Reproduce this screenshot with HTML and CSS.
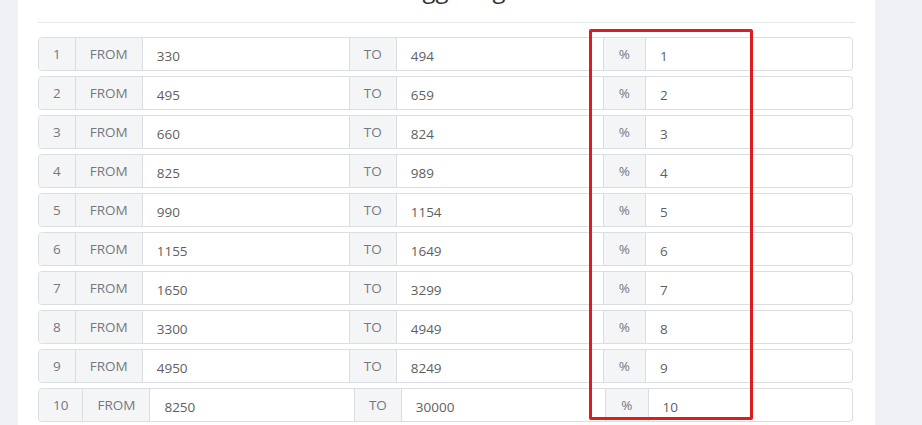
FILE: index.html
```html
<!DOCTYPE html>
<html lang="en">
<head>
<meta charset="utf-8">
<title>Ranges</title>
<link rel="stylesheet" href="styles.css">
</head>
<body>
<div class="page">
  <div class="card">
    <div class="head"><h2 class="title">Staggering</h2></div>
    <div class="rows">
      <div class="ig"><span class="addon">1</span><span class="addon">FROM</span><span class="val">330</span><span class="addon">TO</span><span class="val">494</span><span class="addon pct">%</span><span class="val">1</span></div>
      <div class="ig"><span class="addon">2</span><span class="addon">FROM</span><span class="val">495</span><span class="addon">TO</span><span class="val">659</span><span class="addon pct">%</span><span class="val">2</span></div>
      <div class="ig"><span class="addon">3</span><span class="addon">FROM</span><span class="val">660</span><span class="addon">TO</span><span class="val">824</span><span class="addon pct">%</span><span class="val">3</span></div>
      <div class="ig"><span class="addon">4</span><span class="addon">FROM</span><span class="val">825</span><span class="addon">TO</span><span class="val">989</span><span class="addon pct">%</span><span class="val">4</span></div>
      <div class="ig"><span class="addon">5</span><span class="addon">FROM</span><span class="val">990</span><span class="addon">TO</span><span class="val">1154</span><span class="addon pct">%</span><span class="val">5</span></div>
      <div class="ig"><span class="addon">6</span><span class="addon">FROM</span><span class="val">1155</span><span class="addon">TO</span><span class="val">1649</span><span class="addon pct">%</span><span class="val">6</span></div>
      <div class="ig"><span class="addon">7</span><span class="addon">FROM</span><span class="val">1650</span><span class="addon">TO</span><span class="val">3299</span><span class="addon pct">%</span><span class="val">7</span></div>
      <div class="ig"><span class="addon">8</span><span class="addon">FROM</span><span class="val">3300</span><span class="addon">TO</span><span class="val">4949</span><span class="addon pct">%</span><span class="val">8</span></div>
      <div class="ig"><span class="addon">9</span><span class="addon">FROM</span><span class="val">4950</span><span class="addon">TO</span><span class="val">8249</span><span class="addon pct">%</span><span class="val">9</span></div>
      <div class="ig"><span class="addon">10</span><span class="addon">FROM</span><span class="val">8250</span><span class="addon">TO</span><span class="val">30000</span><span class="addon pct">%</span><span class="val">10</span></div>
    </div>
  </div>
</div>
<div class="highlight"></div>
</body>
</html>
```
FILE: styles.css
```css
html, body {
  margin: 0;
  padding: 0;
}
body {
  background: #eef0f4;
  font-family: "Open Sans", "Liberation Sans", sans-serif;
  height: 425px;
  overflow: hidden;
}
.page {
  padding-left: 18px;
  width: 857px;
}
.card {
  background: #ffffff;
  padding: 0 20px 0 20px;
  height: 425px;
}
.head {
  height: 22px;
  border-bottom: 1px solid #e6e7ea;
  overflow: hidden;
  text-align: center;
}
.title {
  margin: -23px 0 0 0;
  font-size: 24px;
  line-height: 24px;
  font-weight: 400;
  color: #333;
}
.rows {
  padding-top: 14px;
  padding-right: 2px;
  display: flex;
  flex-direction: column;
  gap: 5px;
}
.ig {
  display: flex;
  height: 34px;
  box-sizing: border-box;
  border: 1px solid #dadde2;
  border-radius: 4px;
  overflow: hidden;
  font-size: 13.5px;
}
.addon {
  display: flex;
  align-items: center;
  padding: 0 14px;
  background: #f4f5f7;
  color: #75787e;
  border-right: 1px solid #dadde2;
}
.addon.pct {
  padding: 0 15px;
}
.val {
  flex: 1 1 0;
  display: flex;
  align-items: center;
  padding: 3px 0 0 14px;
  color: #5f5f5f;
  border-right: 1px solid #dadde2;
}
.val:last-child {
  border-right: 0;
}
.highlight {
  position: absolute;
  left: 589px;
  top: 29px;
  width: 158px;
  height: 385px;
  border: 3px solid #e01b1b;
  border-radius: 2px;
}
```
